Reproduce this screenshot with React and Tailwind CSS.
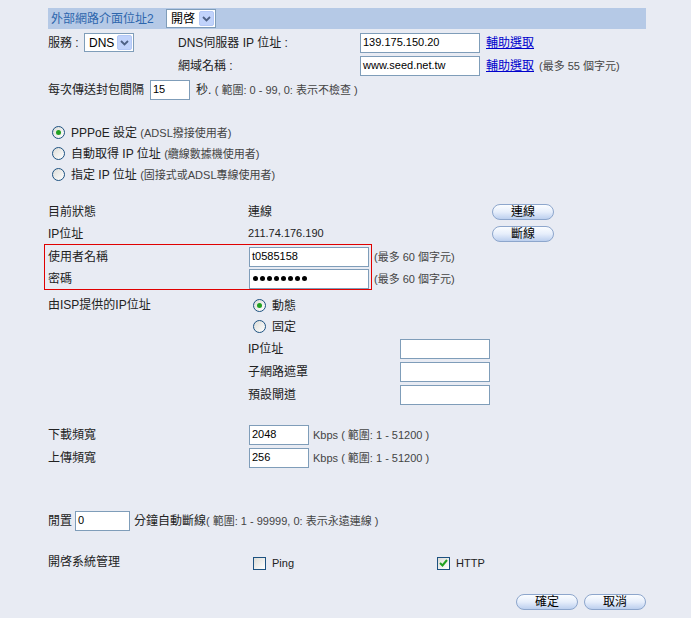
import React from 'react';

const FONT = 'font-["Liberation_Sans","Noto_Sans_CJK_TC",sans-serif]';

const Select = ({ value, w }) => (
  <div className={`flex h-[19px] items-center border border-[#7f9db9] bg-white ${w}`}>
    <span className="flex-1 pl-[4px] text-[12px] leading-none text-black">{value}</span>
    <span className="mr-[1px] flex h-[15px] w-[15px] items-center justify-center rounded-[2px] bg-[#c1d3fb] border border-[#b4c8f6]">
      <svg width="9" height="6" viewBox="0 0 9 6">
        <path d="M1 1 L4.5 4.5 L8 1" fill="none" stroke="#4d6185" strokeWidth="1.8" />
      </svg>
    </span>
  </div>
);

const Input = ({ value, w, type }) => (
  <div className={`flex h-[20px] shrink-0 items-center border border-[#7f9db9] bg-white pl-[2px] text-[11px] text-black ${w}`}>
    {type === 'password' ? (
      <span className="flex gap-[2px] pl-[1px]">
        {Array.from({ length: 8 }).map((_, i) => (
          <span key={i} className="h-[5px] w-[5px] rounded-full bg-black" />
        ))}
      </span>
    ) : (
      value
    )}
  </div>
);

const Radio = ({ checked, label }) => (
  <div className="flex items-center gap-[6px]">
    <span className="flex h-[13px] w-[13px] shrink-0 items-center justify-center rounded-full border border-[#1c5180] bg-gradient-to-br from-[#dcdcd7] to-white">
      {checked && <span className="h-[5px] w-[5px] rounded-full bg-[#21a121]" />}
    </span>
    <span>{label}</span>
  </div>
);

const Check = ({ checked, label }) => (
  <div className="flex items-center gap-[6px]">
    <span className="flex h-[13px] w-[13px] shrink-0 items-center justify-center border border-[#1c5180] bg-gradient-to-br from-[#dcdcd7] to-white">
      {checked && (
        <svg width="9" height="8" viewBox="0 0 9 8">
          <path d="M1 4 L3.5 6.5 L8 1" fill="none" stroke="#21a121" strokeWidth="2" />
        </svg>
      )}
    </span>
    <span className="text-[11px]">{label}</span>
  </div>
);

const PillButton = ({ label }) => (
  <button className="flex h-[16px] w-[62px] items-center justify-center rounded-full border border-[#8da6cc] bg-gradient-to-b from-[#fbfdff] via-[#e6eefb] to-[#bccfee] font-['Liberation_Serif','Noto_Sans_CJK_TC',serif] text-[12px] leading-none text-black">
    {label}
  </button>
);

const Hint = ({ children }) => <span className="text-[11px] text-[#444]">{children}</span>;

const Row = ({ label, h = 'h-[23px]', children, className = '' }) => (
  <div className={`flex items-center ${h} ${className}`}>
    <div className="w-[200px] shrink-0">{label}</div>
    <div className="flex items-center">{children}</div>
  </div>
);

export default function App() {
  return (
    <div className={`min-h-[618px] w-[691px] bg-[#e8ebf3] pt-[8px] text-[12px] text-[#222] ${FONT}`}>
      <div className="ml-[48px] w-[598px]">
        {/* WAN 2 header */}
        <div className="flex h-[21px] items-center bg-[#b5c9e6]">
          <span className="w-[118px] pl-[3px] text-[12px] text-[#2d66ad]">外部網路介面位址2</span>
          <Select value="開啓" w="w-[50px]" />
        </div>

        {/* Service / DNS */}
        <div className="mt-[2px] flex h-[23px] items-center">
          <span className="w-[36px]">服務 :</span>
          <Select value="DNS" w="w-[50px]" />
          <span className="ml-[44px] w-[182px]">DNS伺服器 IP 位址 :</span>
          <Input value="139.175.150.20" w="w-[120px]" />
          <a className="ml-[6px] text-[#0000cc] underline">輔助選取</a>
        </div>
        <div className="flex h-[23px] items-center">
          <span className="ml-[130px] w-[182px]">網域名稱 :</span>
          <Input value="www.seed.net.tw" w="w-[120px]" />
          <a className="ml-[6px] text-[#0000cc] underline">輔助選取</a>
          <span className="ml-[5px]"><Hint>(最多 55 個字元)</Hint></span>
        </div>
        <div className="flex h-[25px] items-center">
          <span className="w-[102px]">每次傳送封包間隔</span>
          <Input value="15" w="w-[40px]" />
          <span className="ml-[6px]">秒. <Hint>( 範圍: 0 - 99, 0: 表示不檢查 )</Hint></span>
        </div>

        {/* Connection type */}
        <div className="mt-[20px] pl-[4px]">
          <div className="flex h-[21px] items-center">
            <Radio checked label={<>PPPoE 設定 <Hint>(ADSL撥接使用者)</Hint></>} />
          </div>
          <div className="flex h-[21px] items-center">
            <Radio label={<>自動取得 IP 位址 <Hint>(纜線數據機使用者)</Hint></>} />
          </div>
          <div className="flex h-[21px] items-center">
            <Radio label={<>指定 IP 位址 <Hint>(固接式或ADSL專線使用者)</Hint></>} />
          </div>
        </div>

        {/* Status */}
        <Row label="目前狀態" className="mt-[15px]">
          <span className="w-[244px]">連線</span>
          <PillButton label="連線" />
        </Row>
        <Row label="IP位址" h="h-[21px]">
          <span className="w-[244px] text-[11px]">211.74.176.190</span>
          <PillButton label="斷線" />
        </Row>

        {/* Account, highlighted */}
        <div className="-ml-[4px] h-[46px] w-[328px] border border-[#e00000] pl-[3px]">
          <div className="flex h-[23px] items-center">
            <div className="w-[201px] shrink-0">使用者名稱</div>
            <Input value="t0585158" w="w-[120px]" />
            <span className="ml-[5px] shrink-0 whitespace-nowrap"><Hint>(最多 60 個字元)</Hint></span>
          </div>
          <div className="flex h-[21px] items-center">
            <div className="w-[201px] shrink-0">密碼</div>
            <Input type="password" w="w-[120px]" />
            <span className="ml-[5px] shrink-0 whitespace-nowrap"><Hint>(最多 60 個字元)</Hint></span>
          </div>
        </div>

        {/* ISP address */}
        <div className="mt-[3px] flex">
          <div className="w-[200px] shrink-0 pt-[3px]">由ISP提供的IP位址</div>
          <div className="pt-[2px]">
            <div className="flex h-[21px] items-center pl-[5px]">
              <Radio checked label="動態" />
            </div>
            <div className="flex h-[21px] items-center pl-[5px]">
              <Radio label="固定" />
            </div>
            {['IP位址', '子網路遮罩', '預設閘道'].map((l) => (
              <div key={l} className="flex h-[23px] items-center">
                <span className="w-[152px]">{l}</span>
                <Input value="" w="w-[90px]" />
              </div>
            ))}
          </div>
        </div>

        {/* Bandwidth */}
        <Row label="下載頻寬" className="mt-[17px]">
          <span className="ml-[1px]"><Input value="2048" w="w-[60px]" /></span>
          <span className="ml-[4px]"><Hint>Kbps ( 範圍: 1 - 51200 )</Hint></span>
        </Row>
        <Row label="上傳頻寬">
          <span className="ml-[1px]"><Input value="256" w="w-[60px]" /></span>
          <span className="ml-[4px]"><Hint>Kbps ( 範圍: 1 - 51200 )</Hint></span>
        </Row>

        {/* Idle */}
        <div className="mt-[40px] flex h-[23px] items-center">
          <span className="w-[27px]">閒置</span>
          <Input value="0" w="w-[55px]" />
          <span className="ml-[4px]">分鐘自動斷線<Hint>( 範圍: 1 - 99999, 0: 表示永遠連線 )</Hint></span>
        </div>

        {/* Remote management */}
        <div className="mt-[18px] flex h-[23px] items-start pt-[3px]">
          <div className="w-[205px] shrink-0">開啓系統管理</div>
          <div className="w-[184px] pt-[2px]"><Check label="Ping" /></div>
          <div className="pt-[2px]"><Check checked label="HTTP" /></div>
        </div>

        {/* Actions */}
        <div className="mt-[21px] flex justify-end gap-[6px]">
          <PillButton label="確定" />
          <PillButton label="取消" />
        </div>
      </div>
    </div>
  );
}
